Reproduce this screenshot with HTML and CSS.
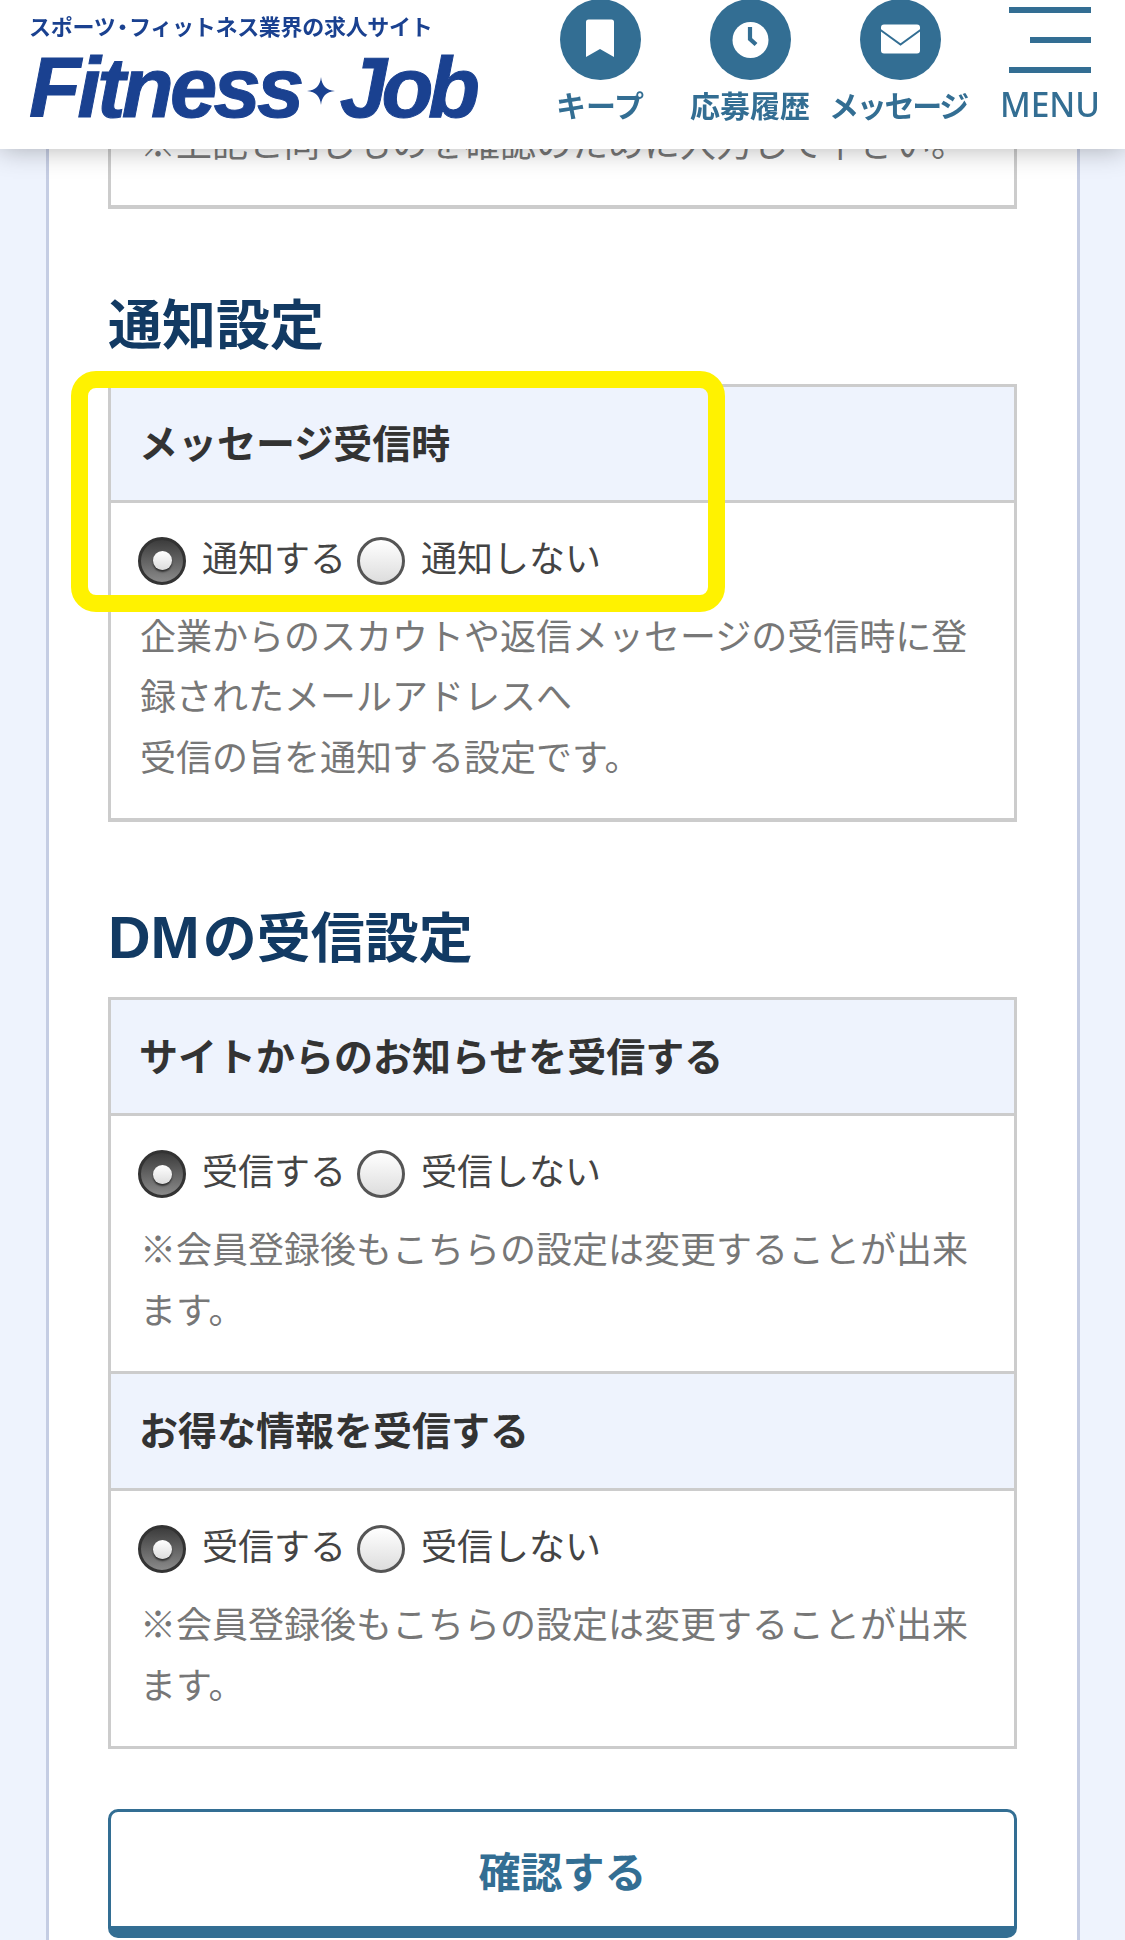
FILE: index.html
```html
<!DOCTYPE html>
<html lang="ja">
<head>
  <meta charset="UTF-8" />
  <meta name="viewport" content="width=device-width, initial-scale=1.0"/>
  <title>Fitness Job - 通知設定</title>
  <link rel="stylesheet" href="styles.css">
</head>
<body>
  <header class="site-header">
    <a class="logo" href="#">
      <span class="logo-tag">スポーツ<span class="tag-dot">・</span>フィットネス業界の求人サイト</span>
      <span class="logo-name"><span class="name-a">Fitness</span><svg class="logo-star" viewBox="0 0 28 28"><path d="M14 0C15 9 19 13 28 14 19 15 15 19 14 28 13 19 9 15 0 14 9 13 13 9 14 0Z"/></svg><span class="name-b">Job</span></span>
    </a>
    <nav class="head-nav">
      <a class="nav-item" href="#">
        <svg class="nav-icon" viewBox="0 0 81 81"><circle cx="40.5" cy="40.5" r="40.5" fill="#336e93"/><path d="M28.5 20.5h23a2.5 2.5 0 0 1 2.5 2.5V58L40 50 26 58V23a2.5 2.5 0 0 1 2.5-2.5z" fill="#fff"/></svg>
        <span>キープ</span>
      </a>
      <a class="nav-item" href="#">
        <svg class="nav-icon" viewBox="0 0 81 81"><circle cx="40.5" cy="40.5" r="40.5" fill="#336e93"/><circle cx="40.5" cy="41" r="18" fill="#fff"/><path d="M40 28V40L46 45.500" fill="none" stroke="#336e93" stroke-width="4.200"/></svg>
        <span>応募履歴</span>
      </a>
      <a class="nav-item nav-tight" href="#">
        <svg class="nav-icon" viewBox="0 0 81 81"><circle cx="40.5" cy="40.5" r="40.500" fill="#336e93"/><rect x="21" y="25.500" width="39" height="29" rx="3" fill="#fff"/><path d="M20.500 31L40.500 45.500 60.500 31" fill="none" stroke="#336e93" stroke-width="2"/></svg>
        <span>メッセージ</span>
      </a>
      <a class="nav-item nav-menu" href="#">
        <span class="menu-icon"><i></i><i class="short"></i><i></i></span>
        <span>MENU</span>
      </a>
    </nav>
  </header>

  <main class="panel">
    <div class="tbl tbl-thick">
      <div class="cell cell-end">
        <p class="note">※上記と同じものを確認のために入力して下さい。</p>
      </div>
    </div>

    <h2 class="sec-title">通知設定</h2>
    <div class="mark-wrap">
      <div class="tbl tbl-thick">
        <div class="cell-head">メッセージ受信時</div>
        <div class="cell">
          <div class="radios">
            <label class="radio"><input type="radio" name="notify" checked>通知する</label>
            <label class="radio"><input type="radio" name="notify">通知しない</label>
          </div>
          <p class="note">企業からのスカウトや返信メッセージの受信時に登録されたメールアドレスへ<br>受信の旨を通知する設定です。</p>
        </div>
      </div>
      <div class="mark"></div>
    </div>

    <h2 class="sec-title"><span class="latin">DM</span>の受信設定</h2>
    <div class="tbl">
      <div class="cell-head">サイトからのお知らせを受信する</div>
      <div class="cell">
        <div class="radios">
          <label class="radio"><input type="radio" name="site" checked>受信する</label>
          <label class="radio"><input type="radio" name="site">受信しない</label>
        </div>
        <p class="note">※会員登録後もこちらの設定は変更することが出来ます。</p>
      </div>
      <div class="cell-head cell-head-next">お得な情報を受信する</div>
      <div class="cell">
        <div class="radios">
          <label class="radio"><input type="radio" name="deal" checked>受信する</label>
          <label class="radio"><input type="radio" name="deal">受信しない</label>
        </div>
        <p class="note">※会員登録後もこちらの設定は変更することが出来ます。</p>
      </div>
    </div>

    <button class="confirm" type="button">確認する</button>
  </main>
</body>
</html>
```

FILE: styles.css
```css
* { margin: 0; padding: 0; box-sizing: border-box; }
html, body { height: 100%; }
body {
  font-family: "Noto Sans CJK JP", sans-serif;
  background: #eef3fd;
  color: #333;
  overflow: hidden;
}
a { color: inherit; text-decoration: none; }

/* header */
.site-header {
  position: fixed;
  top: 0; left: 0; right: 0;
  height: 149px;
  background: #fff;
  box-shadow: 0 0 26px rgba(0, 0, 0, 0.3);
  display: flex;
  justify-content: space-between;
  z-index: 10;
}
.logo {
  display: flex;
  flex-direction: column;
  padding: 9px 0 0 29px;
  color: #1a4190;
}
.logo-tag {
  font-size: 22px;
  line-height: 32px;
  font-weight: 700;
  letter-spacing: -0.3px;
  white-space: nowrap;
}
.tag-dot { margin: 0 -4px; }
.logo-name {
  display: flex;
  align-items: center;
  margin-top: 9px;
  font-family: "Liberation Sans", sans-serif;
  font-size: 85px;
  line-height: 76px;
  font-weight: 700;
  font-style: italic;
  -webkit-text-stroke: 1px #1a4190;
}
.name-a { letter-spacing: -3.7px; }
.name-b { letter-spacing: -5.500px; }
.logo-star {
  width: 28px;
  height: 28px;
  margin: 6px 5px 0 6px;
  fill: #1a4190;
  stroke: none;
}
.head-nav { display: flex; }
.nav-item {
  width: 150px;
  display: flex;
  flex-direction: column;
  align-items: center;
  color: #336e93;
  font-size: 30px;
  font-weight: 700;
  white-space: nowrap;
}
.nav-icon {
  width: 81px;
  height: 81px;
  margin-top: -1px;
  margin-bottom: 3px;
  flex: none;
}
.nav-item span:last-child { line-height: 42px; }
.nav-tight { letter-spacing: -2.300px; }
.nav-tight span { margin-left: -4px; }
.nav-menu {
  font-family: "Noto Sans", sans-serif;
  font-weight: 500;
  font-size: 33.500px;
}
.menu-icon {
  width: 82px;
  height: 81px;
  margin-bottom: 2px;
  padding-top: 7px;
  display: flex;
  flex-direction: column;
  align-items: flex-end;
  gap: 24px;
}
.menu-icon i { display: block; width: 82px; height: 6px; background: #336e93; }
.menu-icon i.short { width: 61px; }

/* content */
.panel {
  width: 1034px;
  min-height: 100%;
  margin-left: 46px;
  padding: 0 60px 60px 59px;
  background: #fff;
  border-left: 3px solid #c5cde3;
  border-right: 3px solid #c5cde3;
}
.sec-title {
  margin: 73px 0 22px;
  font-size: 54px;
  line-height: 80px;
  font-weight: 700;
  color: #123a63;
}
.latin {
  margin-right: 3px;
  font-family: "Liberation Sans", sans-serif;
  font-size: 59px;
  line-height: 1;
}
.tbl { border: 3px solid #ccc; }
.tbl-thick { border-bottom-width: 4px; }
.cell-head {
  padding: 25px 28px 30px;
  font-size: 39px;
  line-height: 58px;
  font-weight: 700;
  background: #eef3fd;
  border-bottom: 3px solid #ccc;
}
.cell-head-next { border-top: 3px solid #ccc; padding-bottom: 31px; }
.cell { padding: 32px 29px 33px; }
.cell-end { padding-top: 108px; }
.radios {
  display: flex;
  gap: 11px;
  margin-bottom: 19px;
  margin-left: -2px;
}
.radio {
  display: flex;
  align-items: flex-start;
  gap: 16px;
  font-size: 36px;
  line-height: 42px;
  color: #444;
}
.radio input {
  appearance: none;
  width: 48px;
  height: 48px;
  margin-top: 2px;
  border-radius: 50%;
  border: 3px solid #555;
  background: linear-gradient(#fff, #ddd);
  display: flex;
  align-items: center;
  justify-content: center;
}
.radio input:checked {
  border-color: #333;
  background: linear-gradient(#3c3c3c, #8a8a8a);
}
.radio input:checked::after {
  content: "";
  width: 19px;
  height: 19px;
  border-radius: 50%;
  background: linear-gradient(#fff, #ddd);
  box-shadow: 0 2px 2px rgba(0, 0, 0, 0.6);
}
.note {
  font-size: 36px;
  line-height: 60.500px;
  color: #777;
}

/* yellow highlight over the first row */
.mark-wrap { position: relative; }
.mark {
  position: absolute;
  left: -37px;
  top: -13px;
  width: 654px;
  height: 241px;
  border: 17px solid #fff200;
  border-radius: 25px;
}

.confirm {
  display: block;
  width: 100%;
  height: 129px;
  margin-top: 60px;
  background: #fff;
  border: 3px solid #336e93;
  border-bottom-width: 12px;
  border-radius: 10px;
  font-family: inherit;
  font-size: 42px;
  font-weight: 700;
  color: #336e93;
}
```
